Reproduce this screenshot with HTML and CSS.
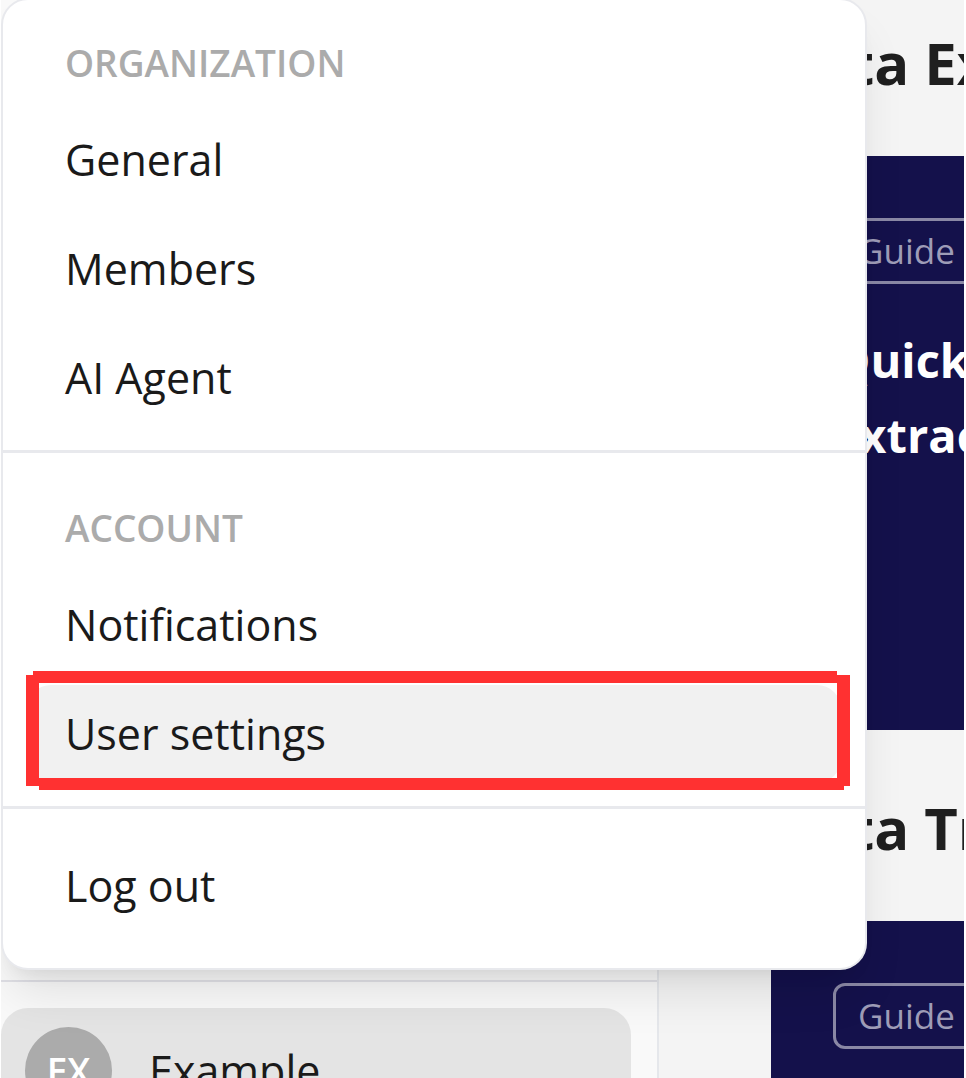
FILE: index.html
```html
<!DOCTYPE html>
<html lang="en">
<head>
  <meta charset="UTF-8">
  <meta name="viewport" content="width=device-width, initial-scale=1.0">
  <title>User settings</title>
  <link rel="stylesheet" href="styles.css">
</head>
<body>
  <div class="page">
    <aside class="sidebar">
      <nav class="menu">
        <div class="section">
          <h2 class="label">ORGANIZATION</h2>
          <a class="item" href="#general">General</a>
          <a class="item" href="#members">Members</a>
          <a class="item" href="#agent">AI Agent</a>
        </div>
        <div class="section">
          <h2 class="label">ACCOUNT</h2>
          <a class="item" href="#notifications">Notifications</a>
          <a class="item active" href="#settings">User settings
            <span class="frame">
              <span class="bar top"></span>
              <span class="bar right"></span>
              <span class="bar bottom"></span>
              <span class="bar left"></span>
            </span>
          </a>
        </div>
        <div class="section">
          <button class="item" type="button">Log out</button>
        </div>
      </nav>
      <div class="footer">
        <button class="user" type="button">
          <span class="avatar">EX</span>
          <span class="name">Example</span>
        </button>
      </div>
    </aside>

    <main class="content">
      <h2 class="title">Data Extraction</h2>
      <article class="card">
        <span class="tag">Guide</span>
        <h3 class="cardTitle">Quick<br>Extraction</h3>
      </article>
      <h2 class="title">Data Transformation</h2>
      <article class="card">
        <span class="tag">Guide</span>
      </article>
    </main>
  </div>
</body>
</html>
```

FILE: styles.css
```css
* { box-sizing: border-box; }
body {
    margin: 0;
    background: white;
    font-family: "Open Sans", "Noto Sans", sans-serif;
    color: #1a1a1a;
}
.page {
    display: grid;
    grid-template-columns: minmax(0, 658fr) minmax(0, 305fr);
    height: 100vh;
    margin: 0 2px 0 1px;
    overflow: hidden;
    background: #f4f4f4;
}
.sidebar {
    background: #f9f9f9;
    border-right: 2px solid #e5e7eb;
}

/* Menu is wider than the sidebar and covers part of the content */
.menu {
    position: relative;
    z-index: 1;
    margin: -2px -210px 0 0;
    padding-bottom: 10px;
    background: white;
    border: 2px solid #e8e9ed;
    border-radius: 27px;
    box-shadow: 0 31px 47px -9px rgba(0, 0, 0, 0.1), 0 12px 19px -12px rgba(0, 0, 0, 0.1);
}
.section {
    display: flex;
    flex-direction: column;
    gap: 11px;
    padding: 28px 24px 23px;
    border-bottom: 3px solid #e8e9ed;
}
.section:first-child { padding-top: 16px; }
.section:last-child { border-bottom: none; }
.label {
    margin: 20px 0 10px;
    padding: 0 38px;
    font-size: 37px;
    line-height: 54px;
    font-weight: 600;
    color: #ababab;
}
.item {
    position: relative;
    padding: 19px 38px;
    border: none;
    border-radius: 24px;
    background: none;
    font: inherit;
    font-size: 43px;
    line-height: 60px;
    text-align: left;
    text-decoration: none;
    color: #1a1a1a;
    cursor: pointer;
}
.active { background: #f1f1f1; }

/* Red frame round the current item */
.frame {
    position: absolute;
    inset: -14px -9px -7px -1px;
}
.bar { position: absolute; background: #ff3131; }
.top { top: 0; left: 7px; right: 13px; height: 12px; }
.right { top: 4px; right: 0; bottom: 4px; width: 13px; }
.bottom { bottom: 0; left: 13px; right: 6px; height: 12px; }
.left { top: 4px; left: 0; bottom: 4px; width: 13px; }

.footer {
    margin-top: 10px;
    padding: 26px 26px 26px 0;
    border-top: 2px solid #e0e0e6;
}
.user {
    display: flex;
    align-items: center;
    gap: 37px;
    width: 100%;
    padding: 19px 24px;
    border: none;
    border-radius: 27px;
    background: #e4e4e4;
    font: inherit;
    color: #1a1a1a;
    cursor: pointer;
}
.avatar {
    width: 87px;
    height: 87px;
    border-radius: 50%;
    background: #ababab;
    color: white;
    font-size: 37px;
    line-height: 87px;
    font-weight: 600;
    text-align: center;
}
.name { font-size: 43px; line-height: 60px; font-weight: 500; }

.content {
    padding: 21px 0 0 112px;
    overflow: hidden;
    white-space: nowrap;
}
.title {
    margin: 0 0 51px;
    font-size: 58px;
    line-height: 84px;
    font-weight: 700;
    color: #1f1f1f;
}
.card {
    min-height: 574px;
    margin-bottom: 56px;
    padding: 62px;
    background: #14114b;
    color: white;
}
.tag {
    display: inline-block;
    padding: 0 22px;
    border: 3px solid #8a88a5;
    border-radius: 12px;
    font-size: 35px;
    line-height: 60px;
    color: #9e9cb7;
}
.cardTitle {
    margin: 39px 0 0;
    font-size: 47px;
    line-height: 75px;
    font-weight: 700;
}
```
